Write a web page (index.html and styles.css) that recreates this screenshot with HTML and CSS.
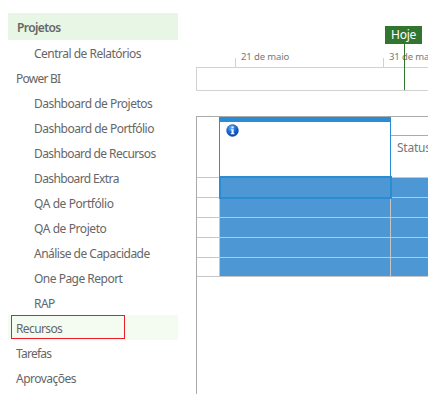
FILE: index.html
```html
<!DOCTYPE html>
<html lang="pt-BR">
<head>
<meta charset="utf-8">
<title>Projetos</title>
<link rel="stylesheet" href="styles.css">
</head>
<body>
<div class="app">
  <nav class="side">
    <a class="item head">Projetos</a>
    <a class="item sub">Central de Relatórios</a>
    <a class="item tighter">Power BI</a>
    <a class="item sub">Dashboard de Projetos</a>
    <a class="item sub">Dashboard de Portfólio</a>
    <a class="item sub snug">Dashboard de Recursos</a>
    <a class="item sub tight">Dashboard Extra</a>
    <a class="item sub loose">QA de Portfólio</a>
    <a class="item sub loose">QA de Projeto</a>
    <a class="item sub">Análise de Capacidade</a>
    <a class="item sub">One Page Report</a>
    <a class="item sub">RAP</a>
    <a class="item hover tight">Recursos</a>
    <a class="item tighter">Tarefas</a>
    <a class="item">Aprovações</a>
  </nav>
  <main class="main">
    <section class="timeline">
      <div class="dates">
        <span class="date">21 de maio</span>
        <span class="date">31 de maio</span>
      </div>
      <div class="track"></div>
      <div class="today"><span class="flag">Hoje</span><i class="stem"></i></div>
    </section>
    <section class="grid">
      <div class="row header">
        <div class="cell num"></div>
        <div class="cell info">
          <svg class="icon" width="13" height="13" viewBox="0 0 13 13">
            <defs><radialGradient id="ball" cx="40%" cy="25%" r="75%"><stop offset="0" stop-color="#5fb0f5"/><stop offset=".5" stop-color="#1c6fdc"/><stop offset="1" stop-color="#0a3f9c"/></radialGradient></defs>
            <circle cx="6.5" cy="6.5" r="5.9" fill="url(#ball)" stroke="#315f9f" stroke-width=".6"/>
            <path d="M5.6 2.4h2v1.8h-2zM4.8 5.2h2.8v4h.9v1.1H4.7V9.2h.9V6.2h-.8z" fill="#fff"/>
          </svg>
        </div>
        <div class="cell status"><div class="band"></div><span>Status</span></div>
      </div>
      <div class="row body"><div class="cell num"></div><div class="cell fill"></div><div class="cell fill last"></div><i class="focus"></i></div>
      <div class="row body"><div class="cell num"></div><div class="cell fill"></div><div class="cell fill last"></div></div>
      <div class="row body"><div class="cell num"></div><div class="cell fill"></div><div class="cell fill last"></div></div>
      <div class="row body"><div class="cell num"></div><div class="cell fill"></div><div class="cell fill last"></div></div>
      <div class="row body short"><div class="cell num"></div><div class="cell fill"></div><div class="cell fill last"></div></div>
    </section>
  </main>
</div>
</body>
</html>
```
FILE: styles.css
```css
*, *::before, *::after { box-sizing: border-box; }
body { margin: 0; background: #fff; color: #666; font-family: "Noto Sans", "Open Sans", sans-serif; overflow: hidden; }
.app { display: flex; width: 428px; height: 400px; overflow: hidden; }

.side { width: 170px; margin: 13px 18px 0 8px; flex: none; }
.item { display: block; height: 25px; padding: 2px 0 0 8px; font-size: 12px; line-height: 24px; letter-spacing: -.51px; white-space: nowrap; }
.item.sub { padding-left: 26px; }
.item.snug { letter-spacing: -.57px; }
.item.tight { letter-spacing: -.62px; }
.item.tighter { letter-spacing: -.75px; }
.item.loose { letter-spacing: -.42px; }
.item.head { height: 27px; padding: 3px 0 0 9px; letter-spacing: -.6px; background: #e8f6e6; font-weight: 600; }
.item.hover { position: relative; background: #f4fcf1; }
.item.hover::after { content: ""; position: absolute; left: 3px; top: 0; width: 114px; height: 24px; border: 1px solid #ed1c24; }

.main { width: 232px; flex: none; overflow: hidden; }
.timeline { position: relative; height: 116px; padding-top: 50px; }
.dates { display: flex; height: 17px; padding-left: 39px; }
.date { position: relative; flex: none; width: 148px; padding-left: 6px; font-size: 9.5px; line-height: 14px; letter-spacing: -.12px; color: #777; white-space: nowrap; }
.date::before { content: ""; position: absolute; left: 0; top: 8px; width: 1px; height: 9px; background: #d2d2d2; }
.track { width: 240px; height: 24px; border: 1px solid #d2d2d2; }
.today { position: absolute; left: 189px; top: 26px; width: 37px; }
.flag { display: block; height: 18px; background: #31752f; color: #fff; font-size: 12px; line-height: 18px; letter-spacing: -.25px; text-align: center; }
.stem { display: block; width: 1px; height: 46px; margin-left: 19px; background: #31752f; }

.grid { height: 278px; border-top: 1px solid #ababab; border-left: 1px solid #ababab; }
.row { display: flex; position: relative; }
.header { height: 61px; border-bottom: 1px solid #c6c6c6; }
.num { width: 22px; flex: none; }
.info { width: 172px; height: 61px; flex: none; padding: 2px 0 0 6px; border: solid #2a8dd4; border-width: 5px 1px 0; }
.icon { display: block; }
.status { flex: 1; font-size: 12px; }
.status span { display: block; padding-left: 6px; margin-top: 3px; letter-spacing: -.25px; line-height: 18px; color: #777; }
.band { height: 19px; border-bottom: 1px solid #ababab; }
.body { height: 20px; border-bottom: 1px solid #c6c6c6; }
.short { height: 19px; }
.fill { width: 171px; flex: none; background: #4c97d4; border-left: 1px solid #c6c6c6; }
.fill.last { width: auto; flex: 1; }
.focus { position: absolute; left: 22px; top: -2px; width: 173px; height: 23px; border: 2px solid #2a8dd4; z-index: 1; }
```
